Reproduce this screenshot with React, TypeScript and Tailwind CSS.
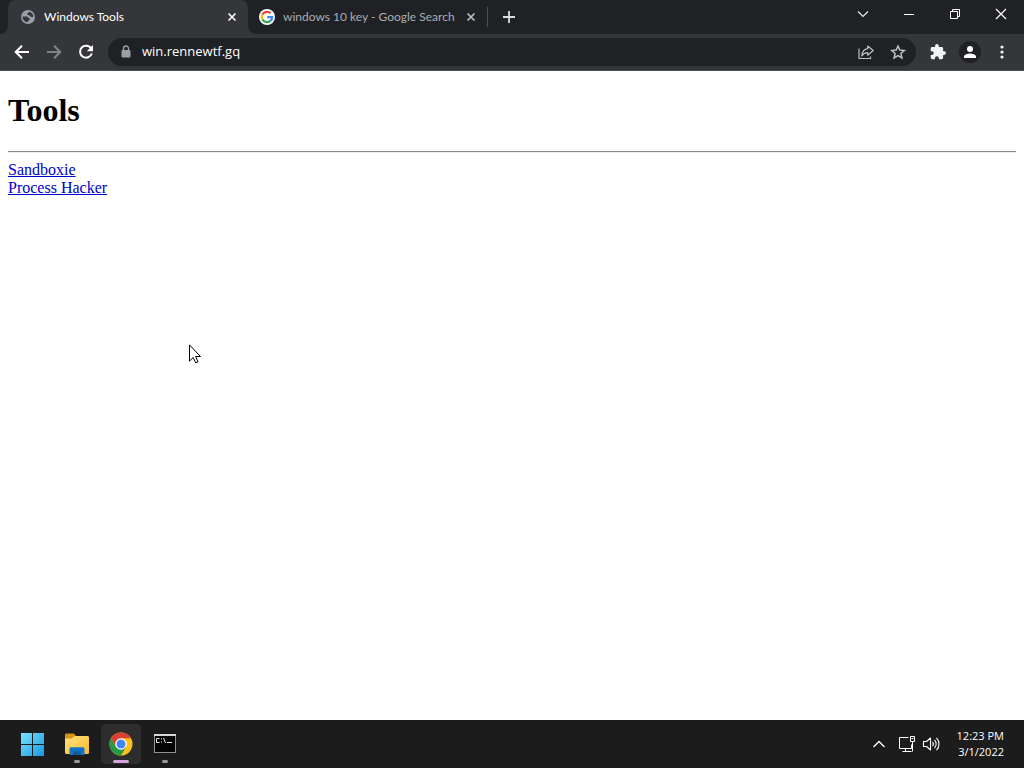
import type { ReactNode } from "react";

type IconProps = { className?: string };

function GlobeIcon() {
  return (
    <svg className="size-4 shrink-0" viewBox="0 0 16 16">
      <circle cx="8" cy="8" r="7" fill="#9aa0a6" />
      <path
        d="M2.500 7.500h4.200c1.400 0 1.400 1.500 2.600 1.800.7.200.8 1.300.1 1.600-1 .3-1.200.6-1.400 1.500-.1.600-.5.900-1.100.9C4.300 12.700 2.500 10.500 2.500 7.500Z"
        fill="#35363a"
      />
      <path
        d="M9.200 2.700C8.900 3.900 7 3.700 7 5.200c0 1.300 1.800.6 2.600 1.200.8.700.9 1.700 2 1.700.7 0 1.200-.4 1.900-.4-.1-2.500-1.900-4.500-4.300-5Z"
        fill="#35363a"
      />
    </svg>
  );
}

function GoogleIcon() {
  return (
    <svg className="size-4 shrink-0" viewBox="0 0 16 16">
      <circle cx="8" cy="8" r="8" fill="#fff" />
      <g fill="none" strokeWidth="2.200">
        <path d="M3.500 5.400A5.200 5.200 0 0 1 11.600 4.200" stroke="#ea4335" />
        <path d="M3.500 10.600a5.200 5.200 0 0 1 0-5.200" stroke="#fbbc05" />
        <path d="M11.500 11.900a5.200 5.200 0 0 1-8-1.300" stroke="#34a853" />
        <path d="M8.200 8.100h5a5.200 5.200 0 0 1-1.700 3.800" stroke="#4285f4" />
      </g>
    </svg>
  );
}

function CloseIcon({ className }: IconProps) {
  return (
    <svg className={className} viewBox="0 0 16 16" fill="none" stroke="currentColor">
      <path d="m4.500 4.500 7 7M11.500 4.500l-7 7" strokeWidth="1.600" />
    </svg>
  );
}

function TabFoot({ className }: IconProps) {
  return (
    <svg className={`absolute bottom-0 size-2 ${className}`} viewBox="0 0 8 8">
      <path d="M8 0v8H0a8 8 0 0 0 8-8Z" fill="#35363a" />
    </svg>
  );
}

function Tab({
  title,
  icon,
  active = false,
}: {
  title: string;
  icon: ReactNode;
  active?: boolean;
}) {
  return (
    <div
      className={
        active
          ? "relative flex h-full w-60 min-w-0 items-center gap-2 rounded-t-lg bg-[#35363a] pl-3 pr-2 text-white"
          : "flex h-full w-60 min-w-0 items-center gap-2 pl-[11px] text-[#a9adb2]"
      }
    >
      {active && (
        <>
          <TabFoot className="-left-2" />
          <TabFoot className="-right-2 -scale-x-100" />
        </>
      )}
      {icon}
      <span className="min-w-0 flex-1 overflow-hidden whitespace-nowrap font-['Lato','Open_Sans',sans-serif] text-xs">
        {title}
      </span>
      <button type="button" aria-label={`Close ${title}`} className="shrink-0">
        <CloseIcon className={active ? "size-4 text-white" : "size-4 text-[#bdc1c6]"} />
      </button>
      {!active && <span className="h-5 w-px shrink-0 bg-[#4a4d51]" />}
    </div>
  );
}

function CaptionButton({ label, children }: { label: string; children: ReactNode }) {
  return (
    <button
      type="button"
      aria-label={label}
      className="flex h-7 w-[46px] items-center justify-center"
    >
      <svg className="size-4" viewBox="0 0 16 16" fill="none" stroke="#fff">
        {children}
      </svg>
    </button>
  );
}

function TabStrip() {
  return (
    <div className="flex h-[34px] bg-[#202124]">
      <div className="flex min-w-0 flex-1 items-center pl-2">
        <Tab title="Windows Tools" icon={<GlobeIcon />} active />
        <Tab title="windows 10 key - Google Search" icon={<GoogleIcon />} />
        <button
          type="button"
          aria-label="New tab"
          className="ml-[7px] flex size-7 shrink-0 items-center justify-center"
        >
          <svg className="size-4" viewBox="0 0 16 16" stroke="#dadce0" strokeWidth="1.800">
            <path d="M8 2v12M2 8h12" />
          </svg>
        </button>
      </div>
      <div className="flex shrink-0">
        <CaptionButton label="Search tabs">
          <path d="m3 5.500 5 5 5-5" stroke="#e8eaed" strokeWidth="1.200" />
        </CaptionButton>
        <CaptionButton label="Minimize">
          <path d="M3 8.500h10" />
        </CaptionButton>
        <CaptionButton label="Restore">
          <path d="M3.500 5.500h7v7h-7zM5.500 5.500v-2h7v7h-2" />
        </CaptionButton>
        <CaptionButton label="Close">
          <path d="m3 3 10 10M13 3 3 13" strokeWidth="1.200" />
        </CaptionButton>
      </div>
    </div>
  );
}

function ToolButton({ label, children }: { label: string; children: ReactNode }) {
  return (
    <button
      type="button"
      aria-label={label}
      className="flex h-7 w-8 shrink-0 items-center justify-center"
    >
      {children}
    </button>
  );
}

function Toolbar() {
  return (
    <div className="flex h-[37px] items-center border-b border-[#4a4b4e] bg-[#35363a] px-1.5">
      <ToolButton label="Back">
        <svg className="size-4" viewBox="0 0 16 16" fill="none" stroke="#fff" strokeWidth="2">
          <path d="M15 8H2.500M8 1.700 1.700 8 8 14.300" />
        </svg>
      </ToolButton>
      <ToolButton label="Forward">
        <svg className="size-4" viewBox="0 0 16 16" fill="none" stroke="#808388" strokeWidth="2">
          <path d="M1 8h12.500M8 1.700 14.300 8 8 14.300" />
        </svg>
      </ToolButton>
      <ToolButton label="Reload">
        <svg className="size-4" viewBox="0 0 16 16" fill="none">
          <path d="M13.300 4.700A6 6 0 1 0 13.800 9.500" stroke="#fff" strokeWidth="2" />
          <path d="M15 1v6.200H8.800Z" fill="#fff" />
        </svg>
      </ToolButton>
      <div className="ml-1.5 mr-1.5 flex h-7 min-w-0 flex-1 items-center rounded-full bg-[#202124] pl-2.5 pr-0.5">
        <svg className="size-4 shrink-0" viewBox="0 0 16 16" fill="none">
          <rect x="3.500" y="6" width="9" height="7.500" rx="1" fill="#9aa0a6" />
          <path d="M5.500 6.500V4.500a2.500 2.500 0 0 1 5 0v2" stroke="#9aa0a6" strokeWidth="1.400" />
        </svg>
        <input
          type="text"
          aria-label="Address"
          defaultValue="win.rennewtf.gq"
          className="ml-2 min-w-0 flex-1 bg-transparent text-[13px] text-white outline-none"
        />
        <ToolButton label="Share this page">
          <svg className="size-4" viewBox="0 0 16 16" fill="none" stroke="#bdc1c6" strokeWidth="1.200">
            <path d="M1 4.500v10h11.500v-2" />
            <path
              d="M9.700 2 15.200 6.500l-5.500 4.700V8.700C7.200 8.700 5.400 9.700 3.800 12c.3-3.800 2-6.800 5.900-7.300Z"
              strokeLinejoin="round"
            />
          </svg>
        </ToolButton>
        <ToolButton label="Bookmark this tab">
          <svg className="size-4" viewBox="0 0 16 16" fill="none" stroke="#bdc1c6" strokeWidth="1.500">
            <path d="m8 2 1.800 4.100 4.500.4-3.400 3 1 4.400L8 11.600l-3.900 2.300 1-4.400-3.400-3 4.500-.4Z" />
          </svg>
        </ToolButton>
      </div>
      <ToolButton label="Extensions">
        <svg className="size-4" viewBox="1 1 22 22" fill="#f1f3f4">
          <path d="M20.500 11H19V7a2 2 0 0 0-2-2h-4V3.500a2.500 2.500 0 0 0-5 0V5H4a2 2 0 0 0-2 2v3.800h1.500a2.700 2.700 0 0 1 0 5.400H2V20a2 2 0 0 0 2 2h3.800v-1.500a2.700 2.700 0 0 1 5.400 0V22H17a2 2 0 0 0 2-2v-4h1.500a2.500 2.500 0 0 0 0-5Z" />
        </svg>
      </ToolButton>
      <ToolButton label="Profile">
        <svg className="size-[22px]" viewBox="0 0 22 22">
          <circle cx="11" cy="11" r="11" fill="#202124" />
          <circle cx="11" cy="8" r="3" fill="#fff" />
          <path d="M5 17v-1.500c0-2 4-3 6-3s6 1 6 3V17Z" fill="#fff" />
        </svg>
      </ToolButton>
      <ToolButton label="Menu">
        <svg className="size-4" viewBox="0 0 16 16" fill="#f1f3f4">
          <circle cx="8" cy="3" r="1.600" />
          <circle cx="8" cy="8" r="1.600" />
          <circle cx="8" cy="13" r="1.600" />
        </svg>
      </ToolButton>
    </div>
  );
}

function ToolsPage() {
  return (
    <main className="flex-1 bg-white px-2 font-['Liberation_Serif',serif] text-base leading-[18px] text-black">
      <h1 className="mt-[21px] text-[32px] font-bold leading-[37px]">Tools</h1>
      <hr className="mb-2 mt-[22px] h-0.5 border-b border-t border-b-[#eeeeee] border-t-[#8a8a8a]" />
      <ul>
        <li>
          <a href="#sandboxie" className="text-[#0000cc] underline">
            Sandboxie
          </a>
        </li>
        <li>
          <a href="#process-hacker" className="text-[#0000cc] underline">
            Process Hacker
          </a>
        </li>
      </ul>
    </main>
  );
}

function TaskButton({
  label,
  state,
  children,
}: {
  label: string;
  state?: "open" | "focused";
  children: ReactNode;
}) {
  return (
    <button
      type="button"
      aria-label={label}
      className={
        state === "focused"
          ? "relative flex size-10 items-center justify-center rounded bg-[#2d2d2d]"
          : "relative flex size-10 items-center justify-center rounded"
      }
    >
      {children}
      {state === "open" && (
        <span className="absolute bottom-px h-[3px] w-1.5 rounded-full bg-[#9a9a9a]" />
      )}
      {state === "focused" && (
        <span className="absolute bottom-px h-[3px] w-4 rounded-full bg-[#d8a0dc]" />
      )}
    </button>
  );
}

function StartIcon() {
  return (
    <svg className="size-6" viewBox="0 0 24 24">
      <defs>
        <linearGradient id="start" x1="0" y1="0" x2="24" y2="24" gradientUnits="userSpaceOnUse">
          <stop stopColor="#7de3fb" />
          <stop offset="1" stopColor="#1596e3" />
        </linearGradient>
      </defs>
      <path d="M0 1h11v11H0zM12 1h11v11H12zM0 13h11v11H0zM12 13h11v11H12z" fill="url(#start)" />
    </svg>
  );
}

function FolderIcon() {
  return (
    <svg className="size-[26px]" viewBox="0 0 26 26">
      <defs>
        <linearGradient id="folder" x1="0" y1="0" x2="1" y2="1">
          <stop stopColor="#ffe083" />
          <stop offset="1" stopColor="#f9bd2b" />
        </linearGradient>
      </defs>
      <path d="M1 4.500C1 3 1.600 2.500 2.800 2.500h6c1 0 1.600.6 2.700 2V9H1Z" fill="#d9950d" />
      <path d="M1 7.500h6.500L11 5h12.500C24.500 5 25 5.600 25 6.500v15c0 .9-.6 1.500-1.500 1.500h-21C1.600 23 1 22.400 1 21.500Z" fill="url(#folder)" />
      <path d="M5.500 24v-6c0-1 .7-1.700 1.700-1.700h11.600c1 0 1.700.7 1.700 1.700v6h-3.300v-3H8.800v3Z" fill="#1173c6" />
      <path d="M8.800 20.500h8.400V24H8.800Z" fill="#0b5ba5" />
    </svg>
  );
}

function ChromeIcon() {
  return (
    <svg className="size-6" viewBox="0 0 24 24">
      <circle cx="12" cy="12" r="11.500" fill="#fbc116" />
      <path d="M2.040 6.250A11.500 11.500 0 0 1 21.960 6.250H12L7 14.900Z" fill="#d93f35" />
      <path d="M2.040 6.250A11.500 11.500 0 0 0 12 23.500L17 14.900 7 14.900Z" fill="#279847" />
      <circle cx="12" cy="12" r="5.800" fill="#fff" />
      <circle cx="12" cy="12" r="4.500" fill="#4285f4" />
    </svg>
  );
}

function TerminalIcon() {
  return (
    <svg className="size-6" viewBox="0 0 24 24">
      <rect x="1" y="2" width="22" height="19" fill="#8f9295" />
      <rect x="1" y="2" width="22" height="2" fill="#d6d8da" />
      <rect x="2" y="4" width="20" height="16" fill="#050505" />
      <g fill="none" stroke="#e8e8e8">
        <path d="M6.500 6.500h-3v4h3M8.500 6.500v1M8.500 9.500v1M10.500 6l2 5M14 10.500h5" />
      </g>
    </svg>
  );
}

function Taskbar() {
  return (
    <footer className="flex h-12 items-center justify-between bg-[#1c1c1c] pl-[13px] pr-5 text-white">
      <nav className="flex gap-1" aria-label="Taskbar">
        <TaskButton label="Start">
          <StartIcon />
        </TaskButton>
        <TaskButton label="File Explorer" state="open">
          <FolderIcon />
        </TaskButton>
        <TaskButton label="Google Chrome" state="focused">
          <ChromeIcon />
        </TaskButton>
        <TaskButton label="Command Prompt" state="open">
          <TerminalIcon />
        </TaskButton>
      </nav>
      <div className="flex items-center">
        <button type="button" aria-label="Show hidden icons" className="mr-[11px]">
          <svg className="size-4" viewBox="0 0 16 16" fill="none" stroke="#fff" strokeWidth="1.300">
            <path d="m2.500 11 5.500-5.500 5.500 5.500" />
          </svg>
        </button>
        <button type="button" aria-label="Network and sound" className="mr-[17px] flex gap-1.5">
          <svg className="size-[18px]" viewBox="0 0 18 18" fill="none" stroke="#fff">
            <path d="M10.500 2.500h-9v11h12v-4M4.500 16.500h9M7.500 13.500v3" />
            <path d="M12.500 1.500h4v5h-4zM14.500 6.500v10M13.500 3.500h2" />
          </svg>
          <svg className="size-[18px]" viewBox="0 0 18 18" fill="none" stroke="#fff" strokeWidth="1.100">
            <path d="M1.500 6.500h3L8.500 3v12l-4-3.500h-3Z" strokeLinejoin="round" />
            <path d="M10.500 6.800a3.500 3.500 0 0 1 0 4.400M12.500 4.800a6.200 6.200 0 0 1 0 8.400M14.500 2.800a9 9 0 0 1 0 12.400" />
          </svg>
        </button>
        <div className="text-right text-[11px] leading-4">
          <div>12:23 PM</div>
          <div>3/1/2022</div>
        </div>
      </div>
    </footer>
  );
}

function Pointer() {
  return (
    <svg
      className="pointer-events-none absolute left-[189px] top-[344px] h-5 w-3"
      viewBox="0 0 12 20"
    >
      <path
        d="M.5.900v16.200l3.700-3.600 2.500 5.300 2.300-1-2.400-5.300h4.900Z"
        fill="#fff"
        stroke="#000"
      />
    </svg>
  );
}

export default function App() {
  return (
    <div className="relative flex min-h-screen flex-col font-['Open_Sans','Noto_Sans',sans-serif]">
      <header>
        <TabStrip />
        <Toolbar />
      </header>
      <ToolsPage />
      <Taskbar />
      <Pointer />
    </div>
  );
}
